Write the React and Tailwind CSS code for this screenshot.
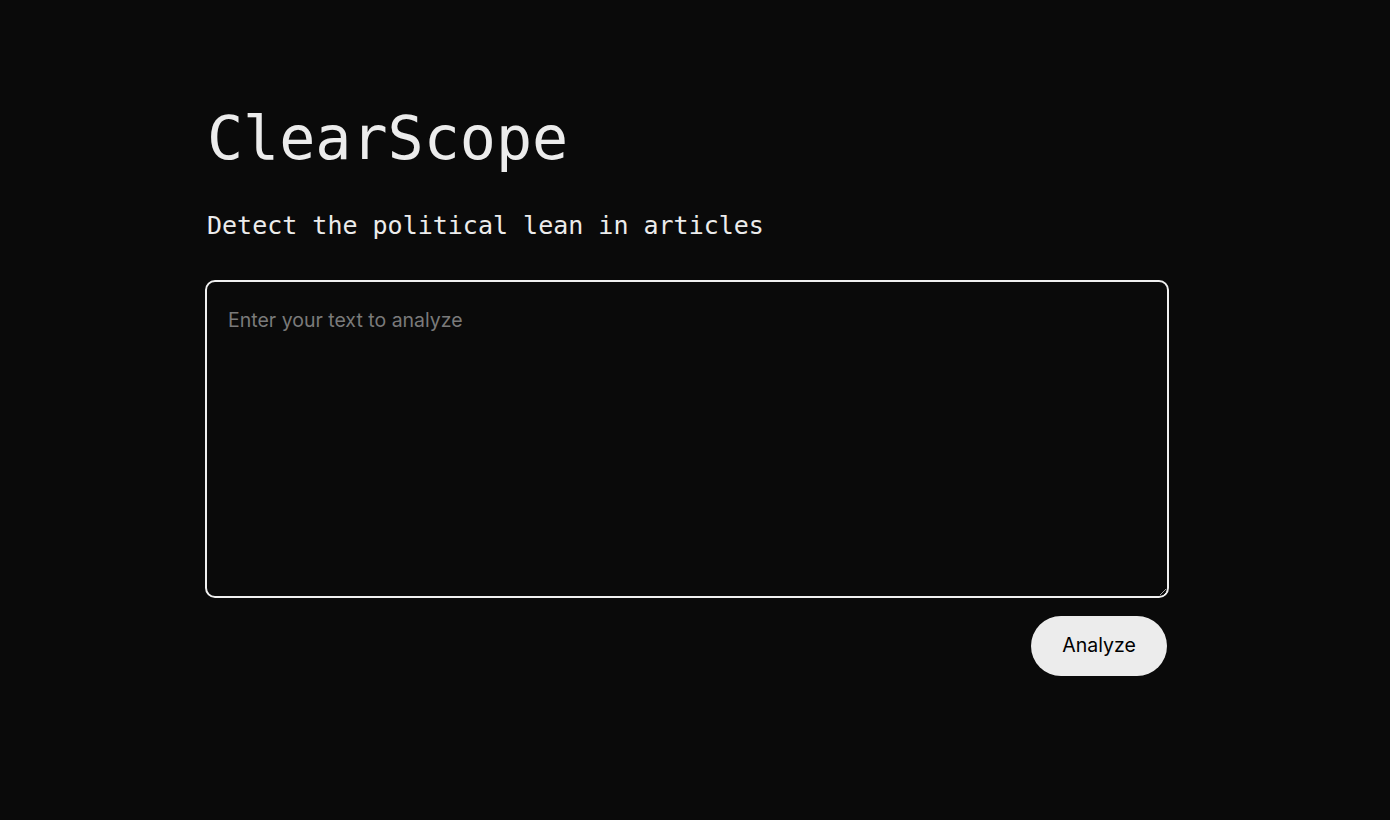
import React, { useState } from "react";

export default function App() {
  const [text, setText] = useState("");

  return (
    <div className="min-h-screen w-full bg-[#0a0a0a]">
      <div className="pl-[205px] pt-[100px]">
        <div className="w-[964px]">
          <h1
            className="pl-[2px] text-[60px] leading-[76px] text-[#ececec]"
            style={{ fontFamily: '"DejaVu Sans Mono", monospace' }}
          >
            ClearScope
          </h1>
          <p
            className="mt-[34px] pl-[2px] text-[25px] leading-[32px] text-[#ececec]"
            style={{ fontFamily: '"DejaVu Sans Mono", monospace' }}
          >
            Detect the political lean in articles
          </p>

          <textarea
            value={text}
            onChange={(e) => setText(e.target.value)}
            placeholder="Enter your text to analyze"
            className="mt-[38px] block h-[318px] w-[964px] rounded-[10px] border-[2.5px] border-[#f0f0f0] bg-[#0a0a0a] px-[21px] py-[24px] text-[19.5px] leading-[28px] text-[#ececec] placeholder-[#7a7a7a] outline-none"
            style={{ fontFamily: "Inter, sans-serif" }}
          />

          <div className="mt-[18px] flex justify-end pr-[2px]">
            <button
              className="h-[60px] w-[136px] rounded-full bg-[#ececec] text-[19.5px] text-black"
              style={{ fontFamily: "Inter, sans-serif" }}
            >
              Analyze
            </button>
          </div>
        </div>
      </div>
    </div>
  );
}
